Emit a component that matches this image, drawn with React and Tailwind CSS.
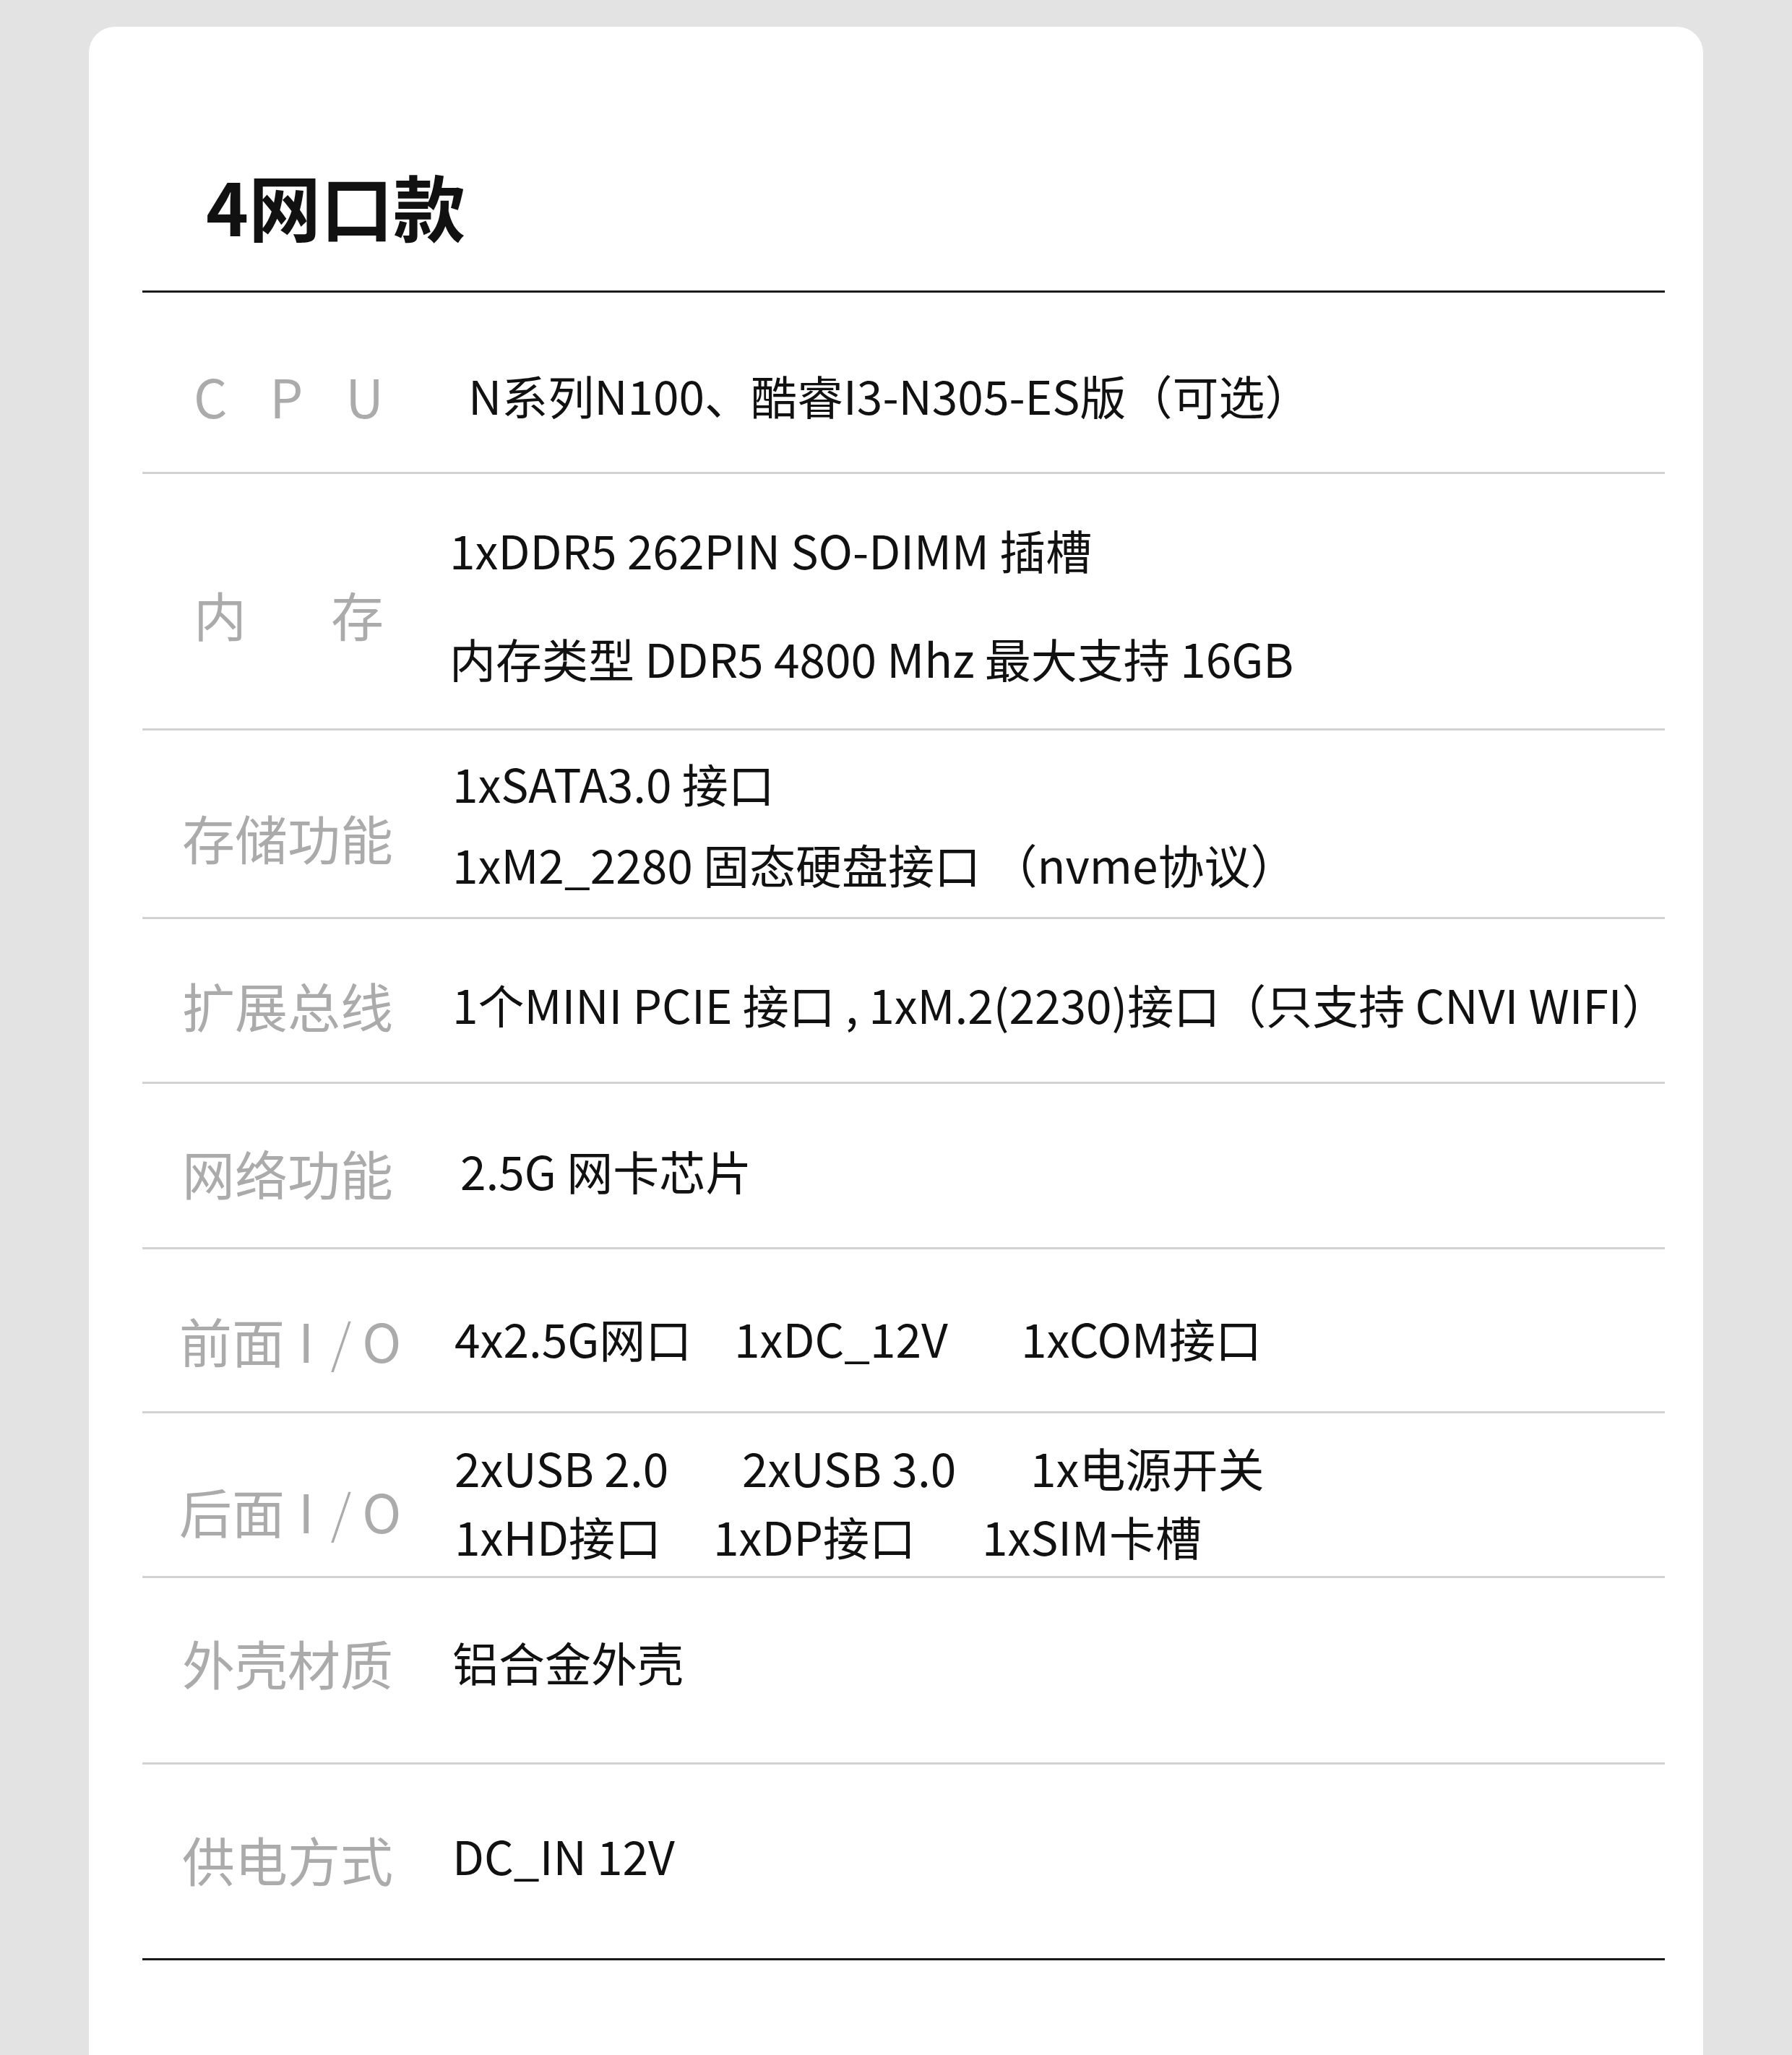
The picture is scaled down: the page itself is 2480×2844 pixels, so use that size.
import React from 'react'

// spec rows: label, row height, vertical nudges, value lines
const specs = [
  {
    label: ['C', 'P', 'U'], narrow: true, h: 'h-[251px]',
    lpad: 'pt-[36px]', vpad: 'pt-[34px] ml-[117px]', lead: 'leading-none',
    lines: [[{ t: 'N系列N100、酷睿I3-N305-ES版（可选）' }]],
  },
  {
    label: ['内', '存'], narrow: true, h: 'h-[355px]',
    lpad: 'pt-[34px]', vpad: 'pt-[6px] ml-[91px]', lead: 'leading-[150px]',
    lines: [[{ t: '1xDDR5 262PIN SO-DIMM 插槽' }], [{ t: '内存类型 DDR5 4800 Mhz 最大支持 16GB' }]],
  },
  {
    label: ['存储功能'], h: 'h-[261px]',
    lpad: 'pt-[36px]', vpad: 'pb-[2px] ml-[78px]', lead: 'leading-[112px]',
    lines: [[{ t: '1xSATA3.0 接口' }], [{ t: '1xM2_2280 固态硬盘接口 （nvme协议）' }]],
  },
  {
    label: ['扩展总线'], h: 'h-[228px]',
    lpad: 'pt-[12px]', vpad: 'pt-[8px] ml-[78px]', lead: 'leading-none',
    lines: [[{ t: '1个MINI PCIE 接口 , 1xM.2(2230)接口（只支持 CNVI WIFI）' }]],
  },
  {
    label: ['网络功能'], h: 'h-[229px]',
    lpad: 'pt-[18px]', vpad: 'pt-[12px] ml-[89px]', lead: 'leading-none',
    lines: [[{ t: '2.5G 网卡芯片' }]],
  },
  {
    label: ['前面', 'I', '/', 'O'], io: true, h: 'h-[227px]',
    lpad: 'pt-[26px]', vpad: 'pt-[20px] ml-[81px]', lead: 'leading-none',
    lines: [[
      { t: '4x2.5G网口', w: 'w-[387px]' },
      { t: '1xDC_12V', w: 'w-[397px]' },
      { t: '1xCOM接口' },
    ]],
  },
  {
    label: ['后面', 'I', '/', 'O'], io: true, h: 'h-[228px]',
    lpad: 'pt-[44px]', vpad: 'pt-[18px] ml-[81px]', lead: 'leading-[95px]',
    lines: [
      [{ t: '2xUSB 2.0', w: 'w-[398px]' }, { t: '2xUSB 3.0', w: 'w-[399px]' }, { t: '1x电源开关' }],
      [{ t: '1xHD接口', w: 'w-[358px]' }, { t: '1xDP接口', w: 'w-[372px]' }, { t: '1xSIM卡槽' }],
    ],
  },
  {
    label: ['外壳材质'], h: 'h-[258px]',
    lpad: 'pb-[22px]', vpad: 'pb-[26px] ml-[78px]', lead: 'leading-none',
    lines: [[{ t: '铝合金外壳' }]],
  },
  {
    label: ['供电方式'], h: 'h-[271px]', last: true,
    lpad: 'pb-[8px]', vpad: 'pb-[18px] ml-[78px]', lead: 'leading-none',
    lines: [[{ t: 'DC_IN 12V' }]],
  },
]

const Label = ({ row }) => {
  if (row.narrow) {
    return (
      <div className={`ml-[71px] w-[263px] flex justify-between ${row.lpad}`}>
        {row.label.map((c, i) => <span key={i}>{c}</span>)}
      </div>
    )
  }
  if (row.io) {
    return (
      <div className={`ml-[51px] w-[300px] flex items-baseline whitespace-nowrap ${row.lpad}`}>
        <span className="shrink-0">{row.label[0]}</span>
        <span className="shrink-0 ml-[19px]">{row.label[1]}</span>
        <span className="shrink-0 ml-[23px] font-light">{row.label[2]}</span>
        <span className="shrink-0 ml-[15px]">{row.label[3]}</span>
      </div>
    )
  }
  return <div className={`ml-[55px] w-[296px] whitespace-nowrap ${row.lpad}`}>{row.label[0]}</div>
}

export default function App() {
  return (
    <div className="h-[2844px] overflow-hidden bg-[#e3e3e3] pt-[37px] font-['Noto_Sans_CJK_SC',sans-serif]">
      <div className="ml-[123px] w-[2234px] h-[2900px] rounded-[36px] bg-white pl-[74px] pr-[53px] pt-[197px]">
        <h1 className="pl-[88px] text-[100px] leading-none font-bold text-[#111] mb-[68px]">4网口款</h1>

        <div className="border-t-[3px] border-[#1a1a1a]">
          {specs.map((row, i) => (
            <div
              key={i}
              className={`flex items-center border-b-[3px] ${row.last ? 'border-[#1a1a1a]' : 'border-[#d2d2d2]'} ${row.h}`}
            >
              <div className="text-[73px] leading-none text-[#ababab] shrink-0">
                <Label row={row} />
              </div>
              <div className={`text-[64px] font-normal text-[#111] whitespace-nowrap ${row.lead} ${row.vpad}`}>
                {row.lines.map((line, j) => (
                  <div key={j} className="flex">
                    {line.map((item, k) => (
                      <span key={k} className={item.w ?? ''}>{item.t}</span>
                    ))}
                  </div>
                ))}
              </div>
            </div>
          ))}
        </div>
      </div>
    </div>
  )
}
